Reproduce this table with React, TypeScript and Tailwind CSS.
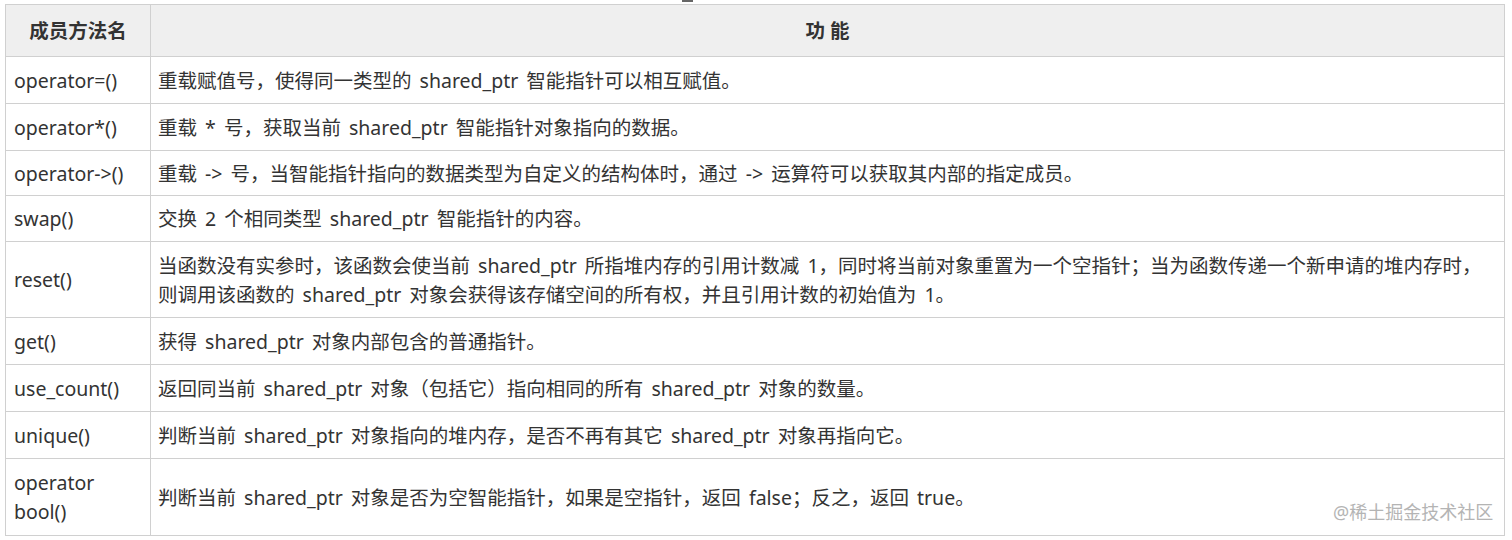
import React from 'react';

const rows: Array<{ name: React.ReactNode; desc: React.ReactNode; h: string }> = [
  { name: 'operator=()', desc: '重载赋值号，使得同一类型的 shared_ptr 智能指针可以相互赋值。', h: 'h-[47px]' },
  { name: 'operator*()', desc: '重载 * 号，获取当前 shared_ptr 智能指针对象指向的数据。', h: 'h-[47px]' },
  { name: 'operator->()', desc: '重载 -> 号，当智能指针指向的数据类型为自定义的结构体时，通过 -> 运算符可以获取其内部的指定成员。', h: 'h-[45px]' },
  { name: 'swap()', desc: '交换 2 个相同类型 shared_ptr 智能指针的内容。', h: 'h-[46px]' },
  {
    name: 'reset()',
    desc: (
      <>
        当函数没有实参时，该函数会使当前 shared_ptr 所指堆内存的引用计数减 1，同时将当前对象重置为一个空指针；当为函数传递一个新申请的堆内存时，
        <br />
        则调用该函数的 shared_ptr 对象会获得该存储空间的所有权，并且引用计数的初始值为 1。
      </>
    ),
    h: 'h-[76px]',
  },
  { name: 'get()', desc: '获得 shared_ptr 对象内部包含的普通指针。', h: 'h-[47px]' },
  { name: 'use_count()', desc: '返回同当前 shared_ptr 对象（包括它）指向相同的所有 shared_ptr 对象的数量。', h: 'h-[47px]' },
  { name: 'unique()', desc: '判断当前 shared_ptr 对象指向的堆内存，是否不再有其它 shared_ptr 对象再指向它。', h: 'h-[47px]' },
  {
    name: (
      <>
        operator
        <br />
        bool()
      </>
    ),
    desc: '判断当前 shared_ptr 对象是否为空智能指针，如果是空指针，返回 false；反之，返回 true。',
    h: 'h-[77px]',
  },
];

export default function App() {
  return (
    <div
      className="relative w-[1512px] h-[540px] bg-white pl-[5px] pt-[4px] text-[#333] text-[19.5px] leading-[29px]"
      style={{ fontFamily: '"Noto Sans", "Noto Sans CJK SC", sans-serif' }}
    >
      <div className="absolute left-[682px] top-0 w-[11px] h-[2px] bg-[#666]" />
      <table className="w-[1500px] border-collapse border border-[#d0d0d0] table-fixed">
        <colgroup>
          <col className="w-[145px]" />
          <col />
        </colgroup>
        <thead>
          <tr className="h-[52px] bg-[#efefef]">
            <th className="border border-[#d0d0d0] font-bold text-center px-2">成员方法名</th>
            <th className="border border-[#d0d0d0] font-bold text-center px-2">功 能</th>
          </tr>
        </thead>
        <tbody>
          {rows.map((r, i) => (
            <tr key={i} className={r.h}>
              <td className="border border-[#d0d0d0] px-[8px] align-middle whitespace-nowrap">{r.name}</td>
              <td className="border border-[#d0d0d0] px-[7px] align-middle whitespace-nowrap [word-spacing:3px]">{r.desc}</td>
            </tr>
          ))}
        </tbody>
      </table>
      <div className="absolute left-[1333px] top-[498px] text-[18px] leading-[28px] text-[#b4b4b4]">@稀土掘金技术社区</div>
    </div>
  );
}
